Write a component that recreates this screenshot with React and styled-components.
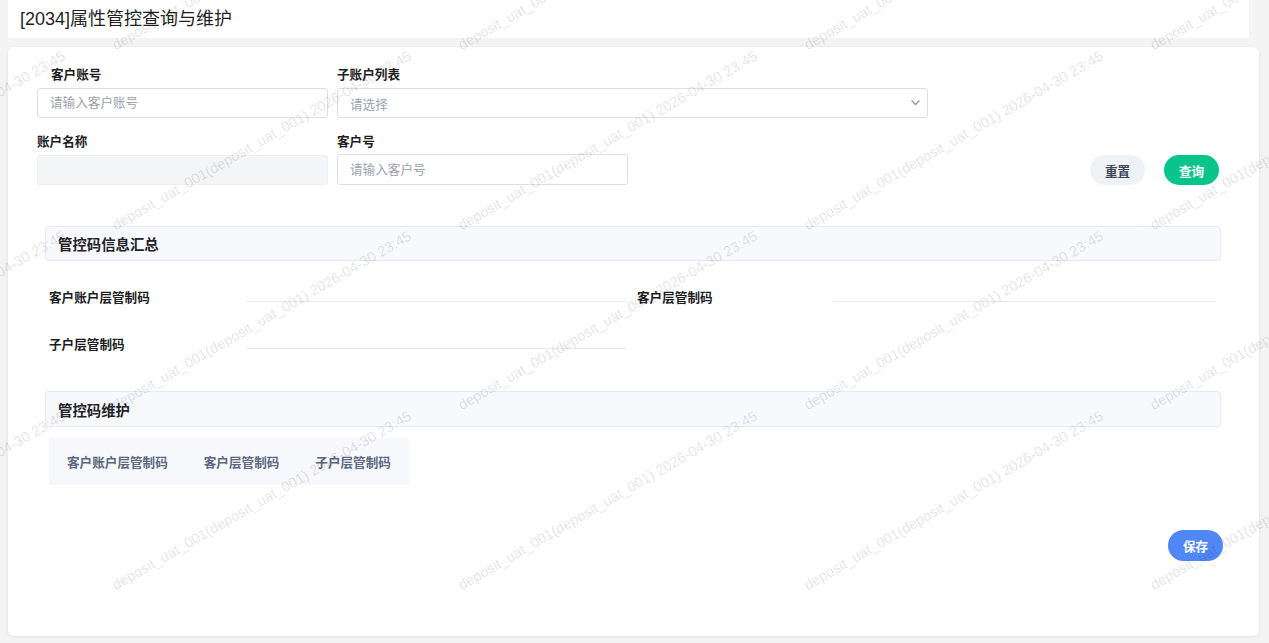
import React from "react";
import styled, { createGlobalStyle } from "styled-components";

const GlobalStyle = createGlobalStyle`
  html, body { margin: 0; padding: 0; }
  body {
    background: #f4f4f5;
    font-family: "Liberation Sans", "Noto Sans CJK SC", sans-serif;
    color: #1f2329;
  }
  * { box-sizing: border-box; }
`;

const Page = styled.div`
  height: 100vh;
  display: flex;
  flex-direction: column;
  padding: 0 10px 7px 8px;
  position: relative;
  overflow: hidden;
`;

const Header = styled.header`
  height: 38px;
  flex: none;
  background: #ffffff;
  margin-right: 10px;
  display: flex;
  align-items: center;
  padding-left: 12px;
`;

const Title = styled.h1`
  margin: 0;
  font-size: 18px;
  font-weight: 400;
  line-height: 24px;
  color: #1f1f1f;
`;

const Card = styled.main`
  flex: 1;
  margin-top: 9px;
  background: #ffffff;
  border-radius: 6px;
  box-shadow: 0 1px 4px rgba(0, 0, 0, 0.08);
  padding: 19px 38px 0 29px;
`;

const FormGrid = styled.div`
  display: grid;
  grid-template-columns: 291px 291px 291px 1fr;
  column-gap: 9px;
  row-gap: 15px;
`;

const Field = styled.div`
  display: flex;
  flex-direction: column;
  gap: 4px;
  grid-column: ${(p) => p.$col || "auto"} / span ${(p) => p.$span || 1};
`;

const Label = styled.label`
  font-size: 12.6px;
  font-weight: 700;
  line-height: 18px;
  color: #1d1d1f;
  padding-left: ${(p) => (p.$indent ? "14px" : "0")};
`;

const TextInput = styled.input`
  height: ${(p) => (p.$tall ? "31px" : "30px")};
  margin-top: ${(p) => (p.$tall ? "-1px" : "0")};
  width: 100%;
  border: 1px solid #dcdfe6;
  border-radius: 3px;
  padding: 0 12px;
  font-family: inherit;
  font-size: 12.6px;
  color: #333;
  background: #fff;
  outline: none;
  &::placeholder { color: #9ca1ab; }
  &:disabled {
    background: #f4f5f7;
    border-color: #eceef2;
  }
`;

const SelectBox = styled.div`
  height: 30px;
  border: 1px solid #dcdfe6;
  border-radius: 3px;
  padding: 0 7px 0 12px;
  display: flex;
  align-items: center;
  justify-content: space-between;
  font-size: 12.6px;
  color: #9ca1ab;
  background: #fff;
`;

const Actions = styled.div`
  grid-column: 4;
  align-self: end;
  justify-self: end;
  display: flex;
  gap: 19px;
  margin-right: 2px;
`;

const Button = styled.button`
  width: 55px;
  height: ${(p) => (p.$tall ? "31px" : "30px")};
  border: none;
  border-radius: 16px;
  font-family: inherit;
  font-size: 12.6px;
  font-weight: 700;
  cursor: pointer;
  background: ${(p) =>
    p.$variant === "green" ? "#07c58a" : p.$variant === "blue" ? "#4f87f7" : "#eef2f7"};
  color: ${(p) => (p.$variant === "ghost" ? "#3d4658" : "#ffffff")};
`;

const Section = styled.section`
  margin-left: 8px;
  margin-top: ${(p) => p.$top}px;
`;

const SectionHeader = styled.div`
  height: ${(p) => p.$h || 35}px;
  border: 1px solid #e3eaf4;
  border-radius: 4px;
  background: #f7f9fc;
  display: flex;
  align-items: center;
  padding-left: 12px;
  font-size: 14.4px;
  font-weight: 700;
  color: #1f2329;
`;

const InfoGrid = styled.div`
  display: grid;
  grid-template-columns: 1fr 1fr;
  column-gap: 10px;
  row-gap: 17px;
  padding: 20px 6px 0 4px;
`;

const InfoItem = styled.div`
  display: flex;
  align-items: center;
  height: 30px;
`;

const InfoLabel = styled.span`
  width: 198px;
  flex: none;
  font-size: 12.6px;
  font-weight: 700;
  color: #1d1d1f;
`;

const InfoValue = styled.div`
  flex: 1;
  align-self: flex-start;
  height: 21px;
  border-bottom: 1px solid #e5ecf8;
`;

const Tabs = styled.div`
  display: inline-flex;
  align-items: center;
  height: 47px;
  margin: 11px 0 0 4px;
  background: #f6f8fb;
`;

const Tab = styled.span`
  padding: 0 18px;
  font-size: 12.6px;
  font-weight: 700;
  color: #5c677d;
`;

const Footer = styled.div`
  display: flex;
  justify-content: flex-end;
  margin: 45px -2px 0 0;
`;

const WatermarkLayer = styled.div`
  position: absolute;
  inset: 0;
  pointer-events: none;
  overflow: hidden;
  z-index: 5;
`;

const WatermarkText = styled.span`
  position: absolute;
  white-space: nowrap;
  font-family: "Liberation Sans", sans-serif;
  font-size: 14.5px;
  line-height: 1;
  color: rgba(0, 0, 0, 0.13);
  transform-origin: 0 100%;
  transform: rotate(-30deg);
`;

const Chevron = () => (
  <svg width="9" height="6" viewBox="0 0 9 6" fill="none">
    <path d="M1 1l3.5 3.5L8 1" stroke="#8d94a6" strokeWidth="1.3" strokeLinecap="round" strokeLinejoin="round" />
  </svg>
);

const WM = "deposit_uat_001(deposit_uat_001) 2026-04-30 23:45";

function Watermark() {
  const items = [];
  for (let k = -1; k <= 3; k++) {
    for (let m = -1; m <= 3; m++) {
      items.push({ x: 117 + 346 * k, y: 50 + 180 * m, key: `${k}-${m}` });
    }
  }
  return (
    <WatermarkLayer>
      {items.map((it) => (
        <WatermarkText key={it.key} style={{ left: it.x, top: it.y - 12 }}>
          {WM}
        </WatermarkText>
      ))}
    </WatermarkLayer>
  );
}

export default function App() {
  return (
    <>
      <GlobalStyle />
      <Page>
        <Header>
          <Title>[2034]属性管控查询与维护</Title>
        </Header>
        <Card>
          <FormGrid>
            <Field $col={1}>
              <Label $indent>客户账号</Label>
              <TextInput placeholder="请输入客户账号" />
            </Field>
            <Field $col={2} $span={2}>
              <Label>子账户列表</Label>
              <SelectBox>
                <span>请选择</span>
                <Chevron />
              </SelectBox>
            </Field>
            <Field $col={1}>
              <Label>账户名称</Label>
              <TextInput disabled />
            </Field>
            <Field $col={2}>
              <Label>客户号</Label>
              <TextInput $tall placeholder="请输入客户号" />
            </Field>
            <Actions>
              <Button $variant="ghost">重置</Button>
              <Button $variant="green">查询</Button>
            </Actions>
          </FormGrid>

          <Section $top={41}>
            <SectionHeader>管控码信息汇总</SectionHeader>
            <InfoGrid>
              <InfoItem>
                <InfoLabel>客户账户层管制码</InfoLabel>
                <InfoValue />
              </InfoItem>
              <InfoItem>
                <InfoLabel>客户层管制码</InfoLabel>
                <InfoValue />
              </InfoItem>
              <InfoItem>
                <InfoLabel>子户层管制码</InfoLabel>
                <InfoValue />
              </InfoItem>
            </InfoGrid>
          </Section>

          <Section $top={33}>
            <SectionHeader $h={36}>管控码维护</SectionHeader>
            <Tabs>
              <Tab>客户账户层管制码</Tab>
              <Tab>客户层管制码</Tab>
              <Tab>子户层管制码</Tab>
            </Tabs>
          </Section>

          <Footer>
            <Button $variant="blue" $tall>保存</Button>
          </Footer>
        </Card>
        <Watermark />
      </Page>
    </>
  );
}
